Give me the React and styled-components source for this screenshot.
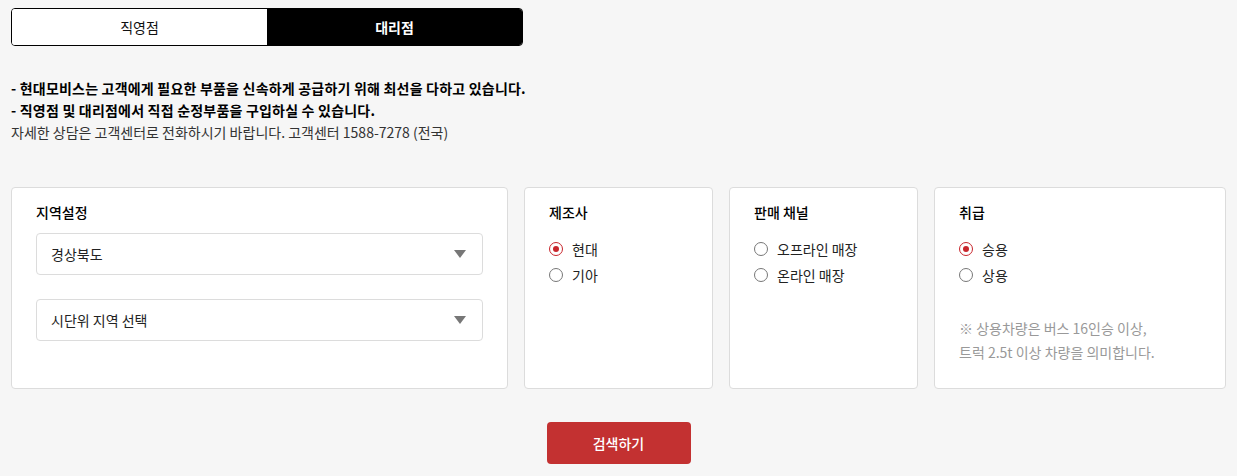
import React, { useState } from "react";
import styled, { createGlobalStyle } from "styled-components";

const Global = createGlobalStyle`
  html, body { margin: 0; padding: 0; background: #f6f6f6; }
  body { font-family: "Noto Sans CJK KR", "Noto Sans", sans-serif; color: #111; }
  * { box-sizing: border-box; }
`;

const Page = styled.div`
  padding: 8px 11px 12px;
`;

const Tabs = styled.div`
  display: flex;
  width: 512px;
  height: 38px;
  border: 1px solid #000;
  border-radius: 4px;
  overflow: hidden;
`;

const Tab = styled.button`
  flex: 1;
  border: none;
  margin: 0;
  padding: 0;
  font-family: inherit;
  font-size: 14px;
  font-weight: ${(p) => (p.$active ? 700 : 400)};
  background: ${(p) => (p.$active ? "#000" : "#fff")};
  color: ${(p) => (p.$active ? "#fff" : "#111")};
  cursor: pointer;
`;

const Notice = styled.div`
  margin-top: 31px;
  font-size: 14px;
  line-height: 22px;
`;

const Strong = styled.p`
  margin: 0;
  font-weight: 700;
  color: #000;
  letter-spacing: 0.2px;
`;

const Plain = styled.p`
  margin: 0;
  color: #333;
`;

const Cards = styled.div`
  margin-top: 44px;
  display: grid;
  grid-template-columns: 497px 189px 189px 292px;
  gap: 16px;
`;

const Card = styled.div`
  height: 202px;
  background: #fff;
  border: 1px solid #dcdcdc;
  border-radius: 4px;
  padding: 14px 24px;
`;

const Title = styled.div`
  font-size: 14px;
  line-height: 20px;
  font-weight: 500;
  color: #000;
`;

const Select = styled.div`
  margin-top: ${(p) => p.$gap}px;
  height: 42px;
  border: 1px solid #dcdcdc;
  border-radius: 4px;
  display: flex;
  align-items: center;
  justify-content: space-between;
  padding: 0 16px 0 14px;
  font-size: 14px;
  color: #222;
`;

const Arrow = styled.span`
  width: 0;
  height: 0;
  border-left: 6px solid transparent;
  border-right: 6px solid transparent;
  border-top: 8px solid #777;
`;

const RadioList = styled.div`
  margin-top: 14px;
  display: flex;
  flex-direction: column;
`;

const RadioRow = styled.label`
  height: 26px;
  display: flex;
  align-items: center;
  gap: 9px;
  font-size: 14px;
  color: #222;
  cursor: pointer;
`;

const Circle = styled.span`
  width: 14px;
  height: 14px;
  border-radius: 50%;
  border: 1px solid ${(p) => (p.$on ? "#c8262c" : "#777")};
  display: flex;
  align-items: center;
  justify-content: center;
  &::after {
    content: "";
    width: 6px;
    height: 6px;
    border-radius: 50%;
    background: ${(p) => (p.$on ? "#c8262c" : "transparent")};
  }
`;

const Note = styled.p`
  margin: 28px 0 0;
  font-size: 14px;
  line-height: 24px;
  color: #999;
`;

const ButtonRow = styled.div`
  margin-top: 33px;
  display: flex;
  justify-content: center;
`;

const SearchButton = styled.button`
  width: 144px;
  height: 42px;
  border: none;
  border-radius: 4px;
  background: #c33131;
  color: #fff;
  font-family: inherit;
  font-size: 14px;
  font-weight: 500;
  cursor: pointer;
`;

function Radio({ on, label, onClick }) {
  return (
    <RadioRow onClick={onClick}>
      <Circle $on={on} />
      {label}
    </RadioRow>
  );
}

export default function App() {
  const [tab, setTab] = useState(1);
  const [maker, setMaker] = useState(0);
  const [channel, setChannel] = useState(-1);
  const [kind, setKind] = useState(0);
  return (
    <Page>
      <Global />
      <Tabs>
        <Tab $active={tab === 0} onClick={() => setTab(0)}>직영점</Tab>
        <Tab $active={tab === 1} onClick={() => setTab(1)}>대리점</Tab>
      </Tabs>
      <Notice>
        <Strong>- 현대모비스는 고객에게 필요한 부품을 신속하게 공급하기 위해 최선을 다하고 있습니다.</Strong>
        <Strong>- 직영점 및 대리점에서 직접 순정부품을 구입하실 수 있습니다.</Strong>
        <Plain>자세한 상담은 고객센터로 전화하시기 바랍니다. 고객센터 1588-7278 (전국)</Plain>
      </Notice>
      <Cards>
        <Card>
          <Title>지역설정</Title>
          <Select $gap={11}>경상북도<Arrow /></Select>
          <Select $gap={24}>시단위 지역 선택<Arrow /></Select>
        </Card>
        <Card>
          <Title>제조사</Title>
          <RadioList>
            {["현대", "기아"].map((l, i) => (
              <Radio key={l} label={l} on={maker === i} onClick={() => setMaker(i)} />
            ))}
          </RadioList>
        </Card>
        <Card>
          <Title>판매 채널</Title>
          <RadioList>
            {["오프라인 매장", "온라인 매장"].map((l, i) => (
              <Radio key={l} label={l} on={channel === i} onClick={() => setChannel(i)} />
            ))}
          </RadioList>
        </Card>
        <Card>
          <Title>취급</Title>
          <RadioList>
            {["승용", "상용"].map((l, i) => (
              <Radio key={l} label={l} on={kind === i} onClick={() => setKind(i)} />
            ))}
          </RadioList>
          <Note>
            ※ 상용차량은 버스 16인승 이상,
            <br />
            트럭 2.5t 이상 차량을 의미합니다.
          </Note>
        </Card>
      </Cards>
      <ButtonRow>
        <SearchButton>검색하기</SearchButton>
      </ButtonRow>
    </Page>
  );
}
